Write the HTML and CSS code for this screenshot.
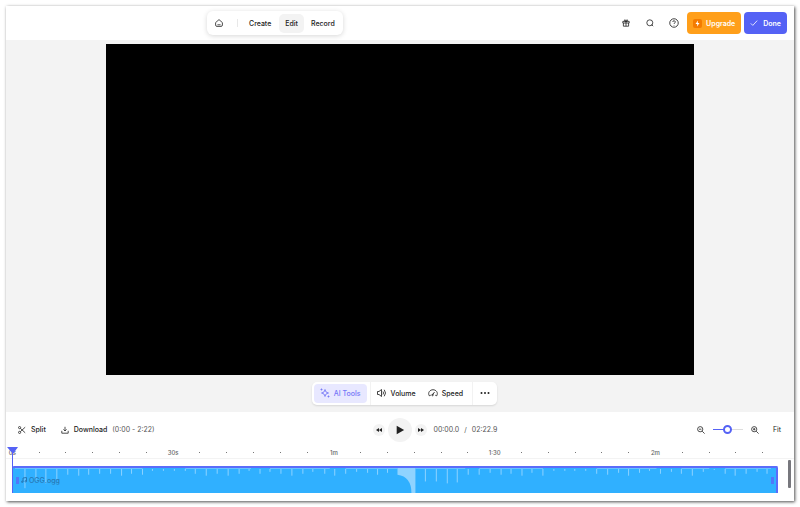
FILE: index.html
```
<!DOCTYPE html>
<html lang="en">
<head>
  <meta charset="UTF-8" />
  <meta name="viewport" content="width=device-width, initial-scale=1.0" />
  <title>Video Editor</title>
  <link rel="stylesheet" href="styles.css">
</head>
<body>
  <div class="app">
    <header class="header">
      <nav class="tabs">
        <a href="#" class="home" aria-label="Home">
          <svg class="icon" viewBox="0 0 20 20"><path d="M1.500 9 10 1.500 18.500 9v6a3.500 3.500 0 0 1-3.500 3.500H5A3.500 3.500 0 0 1 1.500 15z"/><path d="M6 14.500h8"/></svg>
        </a>
        <span class="tabs-divider"></span>
        <a href="#">Create</a>
        <a href="#" class="active">Edit</a>
        <a href="#">Record</a>
      </nav>

      <div class="actions">
        <button class="icon-button" aria-label="Gifts">
          <svg class="icon" viewBox="0 0 20 20"><path d="M2 6h16v4H2zM3.500 10v8h13v-8M10 6v12M10 6C6 6 5 2.500 7 2s3 2 3 4c0-2 1-4.500 3-4s1 4-3 4"/></svg>
        </button>
        <button class="icon-button" aria-label="Search">
          <svg class="icon" viewBox="0 0 20 20"><circle cx="9.500" cy="9.500" r="7.500"/><path d="m14 14 4 4"/></svg>
        </button>
        <button class="icon-button" aria-label="Help">
          <svg class="icon icon-large" viewBox="0 0 20 20"><circle cx="10" cy="10" r="8.500"/><path d="M7.500 8a2.500 2.500 0 1 1 3.500 2.300q-1 .5-1 1.700M10 14v1"/></svg>
        </button>
        <button class="upgrade">
          <svg class="bolt" viewBox="0 0 18 18"><rect width="18" height="18" rx="4" fill="#f47b00"/><path d="M10 3 5 10h3.500L8 15l5-7H9.500z" fill="#fff"/></svg>
          Upgrade
        </button>
        <button class="done">
          <svg class="icon" viewBox="0 0 20 20"><path d="m2 11 5 5L18 4"/></svg>
          Done
        </button>
      </div>
    </header>

    <main class="stage">
      <div class="video"></div>
      <div class="tools">
        <button class="ai-tools">
          <svg class="icon icon-large" viewBox="0 0 20 20"><path d="M10 3q.5 6.500 7 7-6.500.5-7 7-.5-6.500-7-7 6.500-.5 7-7z"/><path d="M3 1v4M1 3h4M17 15v4M15 17h4"/></svg>
          AI Tools
        </button>
        <span class="tools-divider"></span>
        <button>
          <svg class="icon icon-large" viewBox="0 0 20 20"><path d="M1 7h3l5-4v14l-5-4H1zM12 7q2 3 0 6M14.500 3.500q5 6.500 0 13"/></svg>
          Volume
        </button>
        <button>
          <svg class="icon icon-large" viewBox="0 0 20 20"><path d="M2.500 15.500C-1 9 4 3.500 10 3.500s11 5.500 7.500 12l-3-1M2.500 15.500l3-1M9 14l4-6"/><circle cx="9" cy="14" r="1.500"/></svg>
          Speed
        </button>
        <span class="tools-divider"></span>
        <button class="more" aria-label="More">
          <svg class="icon icon-large" viewBox="0 0 20 20"><g fill="currentColor" stroke="none"><circle cx="3" cy="10" r="2"/><circle cx="10" cy="10" r="2"/><circle cx="17" cy="10" r="2"/></g></svg>
        </button>
      </div>
    </main>

    <section class="panel">
      <div class="controls">
        <div class="clip-actions">
          <button>
            <svg class="icon" viewBox="0 0 20 20"><circle cx="4" cy="4" r="2.700"/><circle cx="4" cy="16" r="2.700"/><path d="M6 6l12 11M6 14 18 3"/></svg>
            Split
          </button>
          <button>
            <svg class="icon" viewBox="0 0 20 20"><path d="M10 2v10M6 8.500l4 4 4-4M2 12v6h16v-6"/></svg>
            Download <span class="range">(0:00 - 2:22)</span>
          </button>
        </div>

        <div class="playback">
          <button class="skip" aria-label="Back">
            <svg viewBox="0 0 12 12"><path d="M6 2v8L0 6zM12 2v8L6 6z"/></svg>
          </button>
          <button class="play" aria-label="Play">
            <svg viewBox="0 0 12 12"><path d="M2 1l9 5-9 5z"/></svg>
          </button>
          <button class="skip" aria-label="Forward">
            <svg viewBox="0 0 12 12"><path d="M0 2v8l6-4zM6 2v8l6-4z"/></svg>
          </button>
        </div>

        <div class="controls-right">
          <div class="time"><span>00:00.0</span><span>/</span><span>02:22.9</span></div>
          <div class="zoom">
            <button class="icon-button" aria-label="Zoom out">
              <svg class="icon" viewBox="0 0 20 20"><circle cx="8" cy="8" r="6.500"/><path d="m13 13 6 6M5 8h6"/></svg>
            </button>
            <input type="range" aria-label="Zoom" min="0" max="100" value="50" />
            <button class="icon-button" aria-label="Zoom in">
              <svg class="icon" viewBox="0 0 20 20"><circle cx="8" cy="8" r="6.500"/><path d="m13 13 6 6M5 8h6M8 5v6"/></svg>
            </button>
            <button class="fit">Fit</button>
          </div>
        </div>
      </div>

      <div class="timeline">
        <!-- one mark every five seconds -->
        <div class="ruler">
          <span>0s</span><i></i><i></i><i></i><i></i><i></i>
          <span>30s</span><i></i><i></i><i></i><i></i><i></i>
          <span>1m</span><i></i><i></i><i></i><i></i><i></i>
          <span>1:30</span><i></i><i></i><i></i><i></i><i></i>
          <span>2m</span><i></i><i></i><i></i><i></i>
        </div>
        <div class="tracks">
          <div class="clip">
            <svg class="wave" viewBox="0 0 766 26" preserveAspectRatio="none">
              <path class="peaks" d="M12 1v20M23 1v12M33 1v15M44 1v11M55 1v6M66 1v7M76 1v6M87 1v5M98 1v5M109 1v7M119 1v5M130 1v6M140 1v2M151 1v2M162 1v2M173 1v2M183 1v5M194 1v7M205 1v5M216 1v7M227 1v5M237 1v2M248 1v5M258 1v3M269 1v5M280 1v7M291 1v5M301 1v3M313 1v5M323 1v7M334 1v5M345 1v3M356 1v4M366 1v6M376 1v4M414 1v13M425 1v13M436 1v15M446 1v14M457 1v6M468 1v6M479 1v4M490 1v6M500 1v5M511 1v7M521 1v4M532 1v7M543 1v2M554 1v2M564 1v2M575 1v2M586 1v5M597 1v6M608 1v4M618 1v7M629 1v4M639 1v2M650 1v5M661 1v3M671 1v5M682 1v7M693 1v3M704 1v1M715 1v5M725 1v7M736 1v5M747 1v3M757 1v5"/>
              <path class="level" d="M2 .5h128M173 .5h66M258 .5h60M334 .5h52M404 .5h50M468 .5h64M586 .5h60M671 .5h28M715 .5h46"/>
              <path class="swell" d="M386 0h18v26h-4q0-17-14-19z"/>
            </svg>
            <div class="clip-label">
              <span class="handle"></span>
              <svg class="note" viewBox="0 0 12 12"><path d="M4 9.500V2l7-1v7.500"/><circle cx="2.500" cy="9.500" r="1.500"/><circle cx="9.500" cy="8.500" r="1.500"/></svg>
              <span>OGG.ogg</span>
              <span class="handle handle-end"></span>
            </div>
          </div>
          <div class="scroll-thumb"></div>
        </div>
        <div class="playhead"></div>
      </div>
    </section>
  </div>
</body>
</html>
```
FILE: styles.css
```
* {
  box-sizing: border-box;
}

body {
  margin: 0;
  padding: 6px;
  background-color: #fff;
  color: #222;
  font-family: Inter, "Liberation Sans", sans-serif;
  font-size: 7px;
  font-weight: 500;
  line-height: 11px;
}

a {
  color: inherit;
  text-decoration: none;
}

button {
  display: flex;
  align-items: center;
  padding: 0;
  border: none;
  background: none;
  color: inherit;
  font: inherit;
  cursor: pointer;
}

.icon {
  width: 8px;
  height: 8px;
  fill: none;
  stroke: currentColor;
  stroke-width: 2;
  flex: none;
}

.icon-large {
  width: 10px;
  height: 10px;
  stroke-width: 1.7;
}

.app {
  background-color: #fff;
  box-shadow: 1px 1px 3px rgba(0, 0, 0, 0.7);
}

/* header */

.header {
  display: flex;
  align-items: center;
  justify-content: space-between;
  height: 34px;
  padding: 0 7px 0 201px;
}

.tabs {
  display: flex;
  align-items: center;
  height: 24px;
  padding: 0 2px 0 8px;
  border-radius: 6px;
  box-shadow: 0 1px 5px rgba(0, 0, 0, 0.16);
}

.tabs a {
  padding: 4px 6px;
  border-radius: 5px;
}

.tabs .home {
  display: flex;
  padding: 0;
}

.tabs .active {
  margin: 0 1px 0 2px;
  background-color: #f3f3f3;
}

.tabs-divider {
  width: 1px;
  height: 8px;
  margin: 0 5px 0 14px;
  background-color: #e8e8e8;
}

.actions {
  display: flex;
  align-items: center;
}

.actions .icon-button {
  justify-content: center;
  width: 24px;
  height: 20px;
}

.upgrade,
.done {
  height: 22px;
  padding: 0 6px;
  border-radius: 4px;
  color: #fff;
  font-weight: 600;
}

.upgrade {
  gap: 4px;
  margin: 0 3px 0 1px;
  background-color: #ff9f1a;
}

.done {
  gap: 5px;
  background-color: #5562f5;
}

.bolt {
  width: 9px;
  height: 9px;
}

/* preview */

.stage {
  padding: 4px 100px 7px;
  background-color: #f3f3f3;
}

.video {
  aspect-ratio: 16 / 9;
  background-color: #000;
}

.tools {
  display: flex;
  align-items: center;
  width: fit-content;
  height: 23px;
  margin: 7px 0 0 35%;
  padding: 0 7px 0 2px;
  border-radius: 5px;
  background-color: #fff;
  box-shadow: 0 1px 2px rgba(0, 0, 0, 0.12);
}

.tools button {
  gap: 4px;
  height: 19px;
  padding: 0 6px;
}

.tools .ai-tools {
  border-radius: 4px;
  background-color: #e8e8ff;
  color: #7476f7;
}

.tools .more {
  padding: 0;
}

.tools-divider {
  width: 1px;
  height: 23px;
  margin-left: 3px;
  background-color: #f2f2f2;
}

.more {
  margin-left: 7px;
}

/* bottom panel */

.panel {
  padding-bottom: 8px;
}

.controls {
  display: grid;
  grid-template-columns: 1fr auto 1fr;
  align-items: center;
  padding: 6px 13px 0 12px;
}

.clip-actions {
  display: flex;
  gap: 15px;
}

.clip-actions button {
  gap: 5px;
}

.range,
.time {
  color: #555;
  font-weight: 400;
}

.playback {
  display: flex;
  align-items: center;
  gap: 3px;
}

.playback button {
  justify-content: center;
  border-radius: 50%;
  background-color: #f3f3f3;
}

.playback svg {
  fill: #222;
}

.skip {
  width: 12px;
  height: 12px;
}

.skip svg {
  width: 6px;
  height: 6px;
}

.play {
  width: 24px;
  height: 24px;
}

.play svg {
  width: 10px;
  height: 10px;
}

.controls-right {
  display: flex;
  align-items: center;
  justify-content: space-between;
  padding-left: 7px;
}

.time {
  display: flex;
  gap: 5px;
}

.zoom {
  display: flex;
  align-items: center;
  gap: 8px;
}

.zoom input {
  appearance: none;
  width: 30px;
  height: 10px;
  margin: 0;
  background: linear-gradient(to right, #5562f5 50%, #ddd 50%) center / 100% 1px no-repeat;
}

.zoom input::-webkit-slider-thumb {
  appearance: none;
  width: 9px;
  height: 9px;
  border: 2px solid #5562f5;
  border-radius: 50%;
  background-color: #fff;
}

.fit {
  margin-left: 6px;
  font-weight: 400;
}

/* timeline */

.timeline {
  position: relative;
  padding-left: 6px;
}

.ruler {
  display: grid;
  grid-template-columns: repeat(29, 1fr);
  align-items: center;
  justify-items: center;
  height: 11px;
  margin: 5px 18px 0 -13px;
  color: #666;
  font-size: 6px;
}

.ruler i {
  width: 1px;
  height: 1px;
  background-color: #777;
}

.tracks {
  display: flex;
  margin-left: -6px;
  padding: 1px 3px 0 6px;
  border-top: 1px solid #f3f3f3;
}

.clip {
  position: relative;
  flex: 1;
  height: 27px;
  margin-top: 6px;
  border: solid #5b6cfa;
  border-width: 2px 2px 0 1px;
  border-radius: 2px 2px 0 0;
  background-color: #30b0ff;
}

.wave {
  position: absolute;
  inset: 0;
  width: 100%;
  height: 100%;
}

.wave path {
  fill: none;
  stroke: #8fd3ff;
  stroke-width: 1;
}

.wave .level {
  stroke: #69c4ff;
}

.wave .swell {
  fill: #8fd3ff;
  stroke: none;
}

.clip-label {
  position: relative;
  display: flex;
  align-items: center;
  gap: 2px;
  height: 25px;
  padding: 0 2px 0 3px;
  color: #2878b4;
}

.handle {
  width: 3px;
  height: 7px;
  background-color: #5078fa;
}

.handle-end {
  margin-left: auto;
}

.note {
  width: 6px;
  height: 6px;
  fill: none;
  stroke: #2878b4;
  stroke-width: 2;
}

.scroll-thumb {
  width: 3px;
  height: 28px;
  margin-left: 10px;
  border-radius: 1px;
  background-color: #77777d;
}

.playhead {
  position: absolute;
  top: 0;
  bottom: 0;
  left: 6px;
  width: 1px;
  background-color: #5562f5;
}

.playhead::before {
  content: "";
  position: absolute;
  top: 0;
  left: -5px;
  border: solid transparent;
  border-width: 7px 5px 0 6px;
  border-top-color: #5562f5;
}
```
